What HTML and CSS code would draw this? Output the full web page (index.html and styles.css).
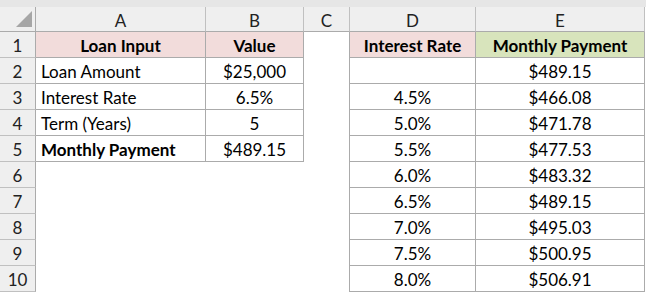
FILE: index.html
```html
<!DOCTYPE html>
<html>
<head>
<meta charset="utf-8">
<link rel="stylesheet" href="styles.css">
</head>
<body>
<div class="topbar"></div>
<div class="sheet">
  <div class="corner"><span class="tri"></span></div>
  <div class="colhdr">A</div>
  <div class="colhdr">B</div>
  <div class="colhdr">C</div>
  <div class="colhdr">D</div>
  <div class="colhdr">E</div>

  <div class="rowhdr">1</div>
  <div class="cell b pink center bold">Loan Input</div>
  <div class="cell b pink center bold">Value</div>
  <div class="cell gapc"></div>
  <div class="cell b pink center bold">Interest Rate</div>
  <div class="cell b green center bold">Monthly Payment</div>

  <div class="rowhdr">2</div>
  <div class="cell b left">Loan Amount</div>
  <div class="cell b center">$25,000</div>
  <div class="cell gapc"></div>
  <div class="cell b center"></div>
  <div class="cell b center">$489.15</div>

  <div class="rowhdr">3</div>
  <div class="cell b left">Interest Rate</div>
  <div class="cell b center">6.5%</div>
  <div class="cell gapc"></div>
  <div class="cell b center">4.5%</div>
  <div class="cell b center">$466.08</div>

  <div class="rowhdr">4</div>
  <div class="cell b left">Term (Years)</div>
  <div class="cell b center">5</div>
  <div class="cell gapc"></div>
  <div class="cell b center">5.0%</div>
  <div class="cell b center">$471.78</div>

  <div class="rowhdr">5</div>
  <div class="cell b left bold">Monthly Payment</div>
  <div class="cell b center">$489.15</div>
  <div class="cell gapc"></div>
  <div class="cell b center">5.5%</div>
  <div class="cell b center">$477.53</div>

  <div class="rowhdr">6</div>
  <div class="cell"></div>
  <div class="cell"></div>
  <div class="cell gapc"></div>
  <div class="cell b center">6.0%</div>
  <div class="cell b center">$483.32</div>

  <div class="rowhdr">7</div>
  <div class="cell"></div>
  <div class="cell"></div>
  <div class="cell gapc"></div>
  <div class="cell b center">6.5%</div>
  <div class="cell b center">$489.15</div>

  <div class="rowhdr">8</div>
  <div class="cell"></div>
  <div class="cell"></div>
  <div class="cell gapc"></div>
  <div class="cell b center">7.0%</div>
  <div class="cell b center">$495.03</div>

  <div class="rowhdr">9</div>
  <div class="cell"></div>
  <div class="cell"></div>
  <div class="cell gapc"></div>
  <div class="cell b center">7.5%</div>
  <div class="cell b center">$500.95</div>

  <div class="rowhdr">10</div>
  <div class="cell"></div>
  <div class="cell"></div>
  <div class="cell gapc"></div>
  <div class="cell b center">8.0%</div>
  <div class="cell b center">$506.91</div>
</div>
</body>
</html>
```

FILE: styles.css
```css
html, body {
  margin: 0;
  padding: 0;
  background: #ffffff;
}
body {
  font-family: Lato, "Open Sans", sans-serif;
  font-size: 17px;
  color: #000;
}
.topbar {
  height: 7px;
  background: #e6e6e6;
}
.sheet {
  display: grid;
  grid-template-columns: 36px 170px 98px 46px 126px 169px;
  grid-template-rows: 25px repeat(10, 26px);
}
.corner {
  background: #efefef;
  border-right: 1px solid #ababab;
  border-bottom: 1px solid #ababab;
  box-sizing: border-box;
  display: flex;
  justify-content: flex-end;
  align-items: flex-end;
  padding: 0 3px 4px 0;
}
.tri {
  width: 0;
  height: 0;
  border-left: 16px solid transparent;
  border-bottom: 16px solid #a6a6a6;
}
.colhdr {
  background: #efefef;
  border-right: 1px solid #c0c0c0;
  border-bottom: 1px solid #ababab;
  box-sizing: border-box;
  display: flex;
  align-items: center;
  justify-content: center;
  color: #222;
  padding-top: 2px;
}
.rowhdr {
  background: #efefef;
  border-right: 1px solid #ababab;
  border-bottom: 1px solid #c0c0c0;
  box-sizing: border-box;
  display: flex;
  align-items: center;
  justify-content: center;
  color: #222;
  padding-top: 2px;
}
.cell {
  box-sizing: border-box;
  display: flex;
  align-items: center;
  padding-top: 2px;
  white-space: nowrap;
}
.cell.b {
  border-right: 1px solid #ababab;
  border-bottom: 1px solid #ababab;
}
.gapc {
  border-right: 1px solid #ababab;
}
.center { justify-content: center; }
.left { padding-left: 5px; }
.bold { font-weight: 700; }
.pink { background: #f2dcdb; }
.green { background: #d8e4bc; }
```
